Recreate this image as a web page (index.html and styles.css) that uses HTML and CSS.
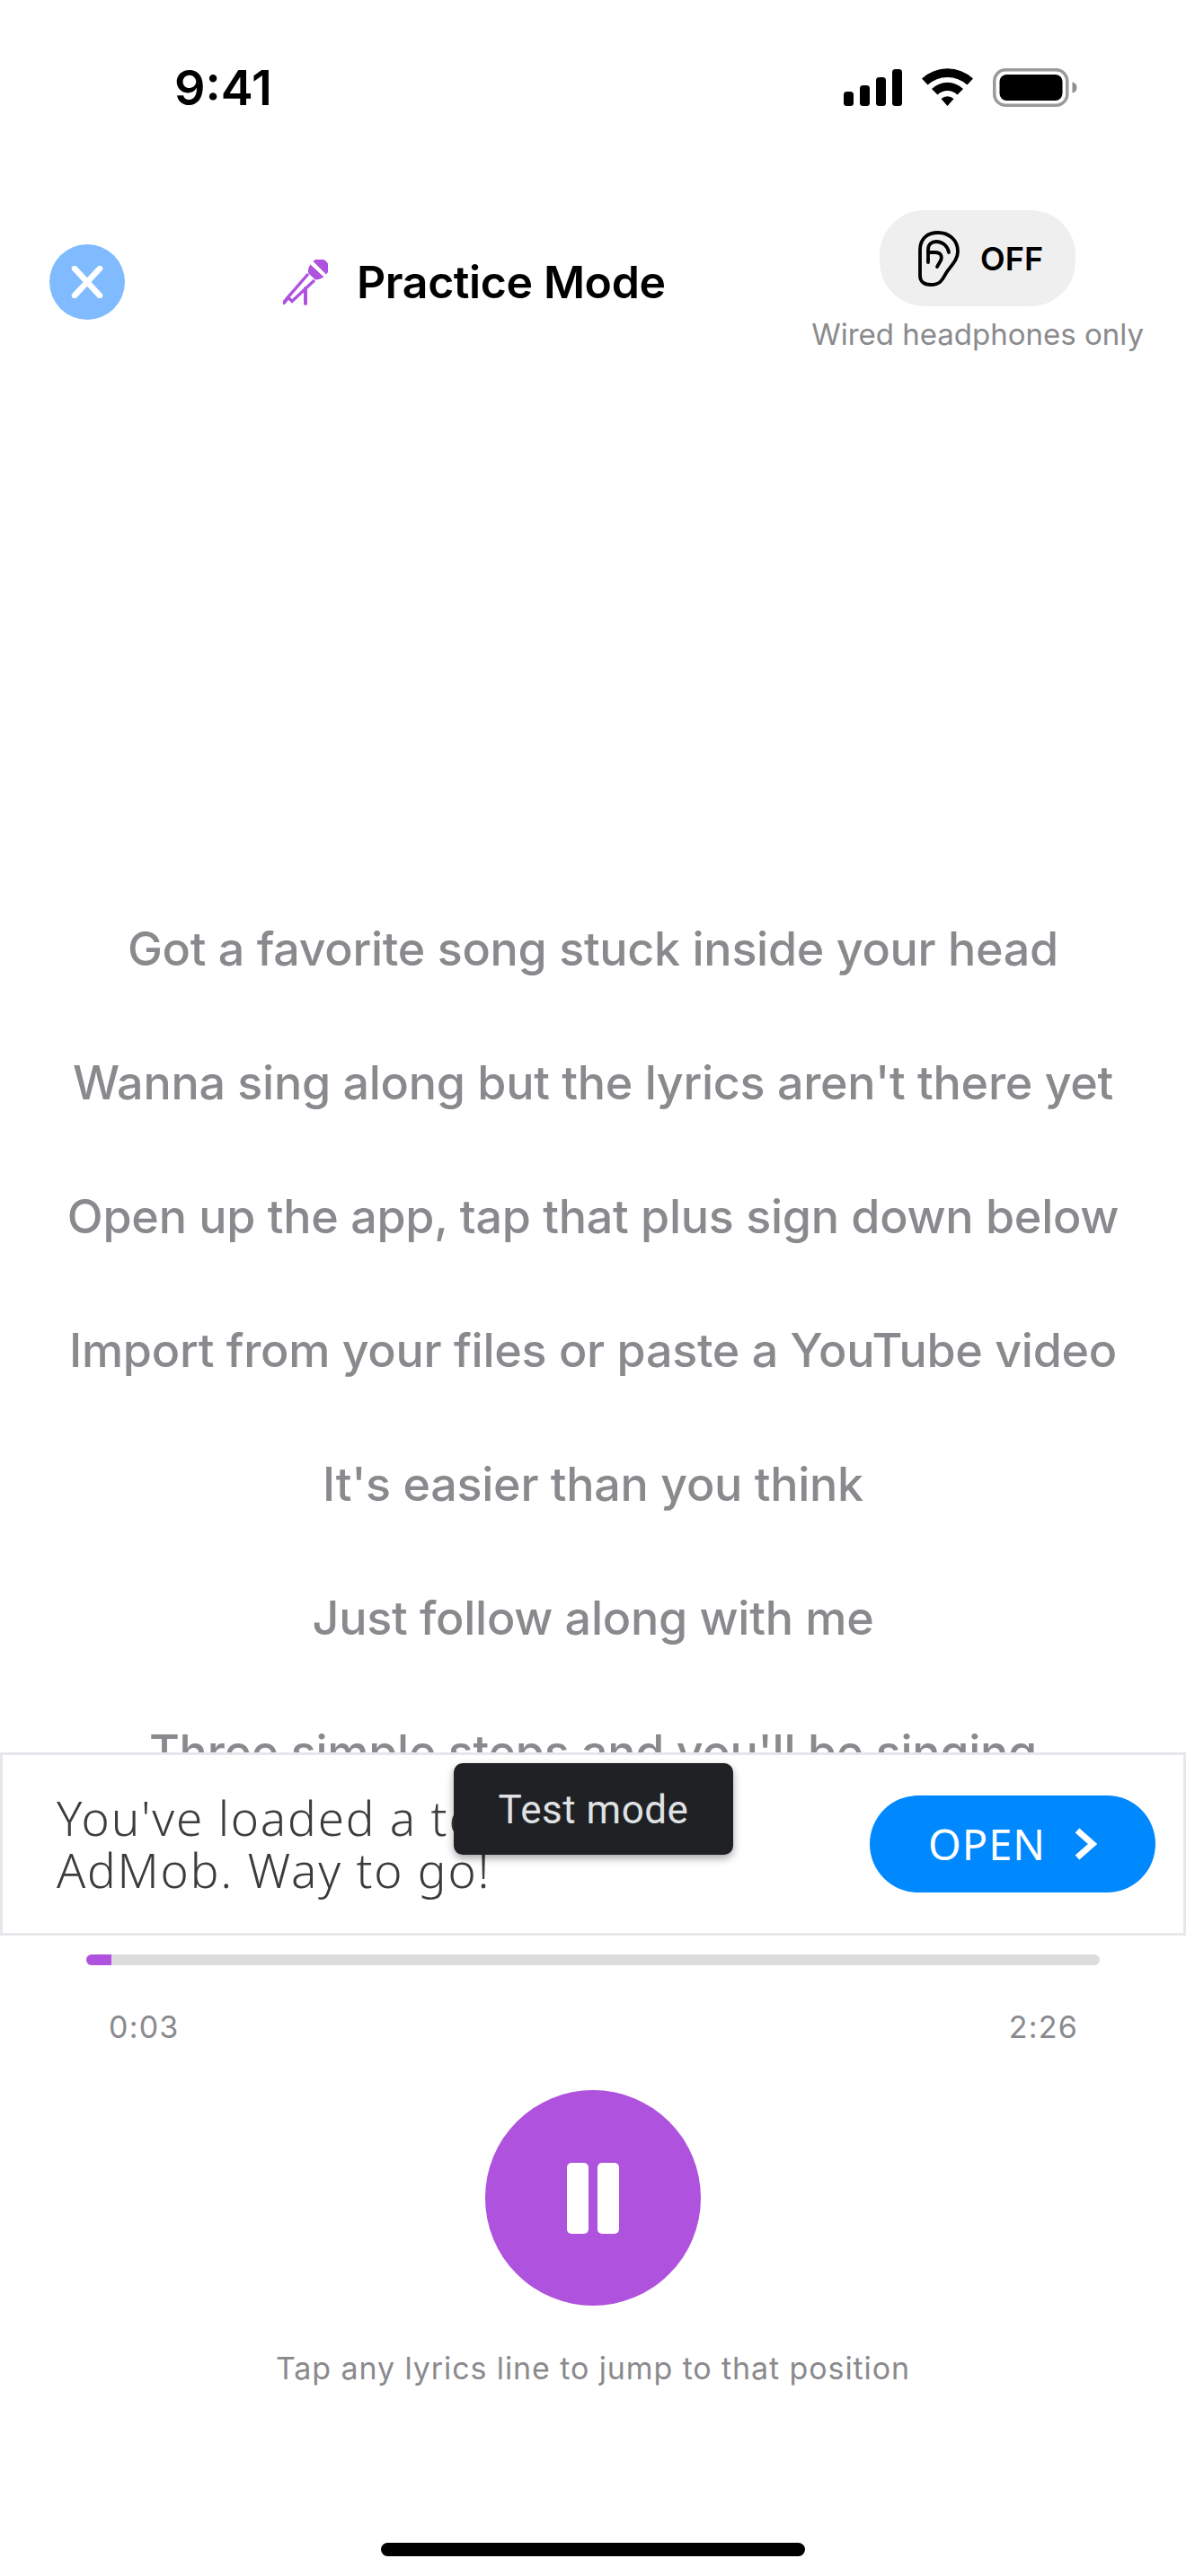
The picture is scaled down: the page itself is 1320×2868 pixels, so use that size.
FILE: index.html
```html
<!DOCTYPE html>
<html lang="en">

<head>
  <meta charset="UTF-8">
  <meta name="viewport" content="width=device-width, initial-scale=1.0">
  <title>Practice Mode</title>
  <link rel="stylesheet" href="styles.css">
</head>

<body>
  <div class="status-bar">
    <span class="clock">9:41</span>
    <div class="status-icons">
      <svg class="signal" width="65" height="41" viewBox="0 0 65 41">
        <rect x="0" y="25" width="11" height="16" rx="3.5" />
        <rect x="18" y="18" width="11" height="23" rx="3.5" />
        <rect x="36" y="9" width="11" height="32" rx="3.5" />
        <rect x="54" y="0" width="11" height="41" rx="3.5" />
      </svg>
      <svg class="wifi" width="57" height="42" viewBox="0 0 57 42">
        <path d="M0 11.5A42 42 0 0 1 57 11.5L50.5 18.5A33 33 0 0 0 6.500 18.5Z" />
        <path d="M11 23A25 25 0 0 1 46 23L39.500 29.500A15.500 15.500 0 0 0 17.500 29.500Z" />
        <path d="M21.500 34A10 10 0 0 1 35.500 34L28.500 42Z" />
      </svg>
      <svg class="battery" width="94" height="43" viewBox="0 0 94 43">
        <rect x="1.750" y="1.750" width="81" height="39.500" rx="12.500" fill="none" stroke="#9a9a9a" stroke-width="3.500" />
        <rect x="7.500" y="7" width="70" height="29" rx="8" />
        <path d="M88.500 15.500C91.500 16 93.500 18.500 93.500 21.500C93.500 24.500 91.500 27 88.500 27.500Z" fill="#8e8e8e" />
      </svg>
    </div>
  </div>

  <header class="top-bar">
    <button class="close-btn">
      <svg width="36" height="36" viewBox="0 0 36 36">
        <path d="M4 3L32 33M32 3L4 33" stroke="#fff" stroke-width="6.500" stroke-linecap="round" />
      </svg>
    </button>
    <div class="title">
      <svg class="mic-icon" width="50" height="51" viewBox="10 9 50 51">
        <path d="M43.500 11A10 10 0 0 1 58 25.500Z" />
        <path d="M40.500 14.500L55.500 28.500Q50.500 31.500 46 31.500L38 24Q37.500 18.500 40.500 14.500Z" />
        <path d="M38 25L15.500 51L20 55.500L45 32" fill="none" stroke="#af52de" stroke-width="3.400" />
        <path d="M15 52L11 57" stroke="#af52de" stroke-width="4" stroke-linecap="round" />
        <path d="M35 41V58" stroke="#af52de" stroke-width="4" stroke-linecap="round" />
      </svg>
      <h1>Practice Mode</h1>
    </div>
    <div class="monitor">
      <button class="monitor-toggle">
        <svg width="46" height="62" viewBox="11 7 46 62" fill="none" stroke="#000" stroke-width="3.800" stroke-linecap="round" stroke-linejoin="round">
          <path d="M13 28C13 15 22 9 33 9C45 9 55 17 55 30C55 40 47 46 42 54C38 61 36 67 25 67C17 67 13 63 13 57Z" />
          <path d="M22 42V28C22 22 26 19 31 19C38 19 44 24 45 31" />
          <path d="M22 31H30C36 31 38 35 36 40L32 47" />
        </svg>
        <span>OFF</span>
      </button>
      <p class="monitor-note">Wired headphones only</p>
    </div>
  </header>

  <div class="lyrics">
    <p>Got a favorite song stuck inside your head</p>
    <p>Wanna sing along but the lyrics aren't there yet</p>
    <p>Open up the app, tap that plus sign down below</p>
    <p>Import from your files or paste a YouTube video</p>
    <p>It's easier than you think</p>
    <p>Just follow along with me</p>
    <p>Three simple steps and you'll be singing</p>
  </div>

  <div class="ad-banner">
    <p class="ad-text">You've loaded a test ad from<br>AdMob. Way to go!</p>
    <button class="ad-open">
      <span>OPEN</span>
      <svg width="25" height="36" viewBox="0 0 25 36">
        <path d="M3 3L20 18L3 33" fill="none" stroke="#fff" stroke-width="7" stroke-linejoin="miter" />
      </svg>
    </button>
    <div class="test-tag">Test mode</div>
  </div>

  <div class="progress-track">
    <div class="progress-fill"></div>
  </div>
  <div class="times">
    <span>0:03</span>
    <span>2:26</span>
  </div>

  <div class="play-wrap">
    <button class="pause-btn">
      <span class="pause-bar"></span>
      <span class="pause-bar"></span>
    </button>
  </div>

  <p class="hint">Tap any lyrics line to jump to that position</p>

  <div class="home-indicator"></div>
</body>

</html>
```

FILE: styles.css
```css
* {
  box-sizing: border-box;
}

body {
  margin: 0;
  width: 1320px;
  height: 2868px;
  overflow: hidden;
  background-color: #ffffff;
  font-family: Inter, "Liberation Sans", sans-serif;
}

p,
h1 {
  margin: 0;
}

button {
  border: none;
  padding: 0;
  font-family: inherit;
}

/* status bar */
.status-bar {
  height: 194px;
  display: flex;
  align-items: center;
  justify-content: space-between;
  padding: 0 121px 0 194px;
}

.clock {
  font-size: 54px;
  font-weight: 600;
  color: #000;
}

.status-icons {
  display: flex;
  align-items: center;
  gap: 22px;
}

/* header */
.top-bar {
  height: 200px;
  padding: 40px 47px 0 55px;
  display: flex;
  align-items: center;
}

.close-btn {
  width: 84px;
  height: 84px;
  border-radius: 50%;
  background-color: #80bbff;
  display: flex;
  align-items: center;
  justify-content: center;
  margin-right: 176px;
}

.title {
  display: flex;
  align-items: center;
  gap: 32px;
}

.title h1 {
  font-size: 50px;
  font-weight: 600;
  letter-spacing: -0.4px;
  color: #000;
}

.mic-icon {
  fill: #af52de;
}

.monitor {
  margin-left: auto;
  align-self: flex-start;
  display: flex;
  flex-direction: column;
  align-items: center;
}

.monitor-toggle {
  width: 218px;
  height: 107px;
  padding-left: 43px;
  border-radius: 50px;
  background-color: #efefef;
  display: flex;
  align-items: center;
  gap: 23px;
  font-size: 36px;
  font-weight: 600;
  color: #000;
}

.monitor-note {
  margin-top: 11px;
  font-size: 33px;
  line-height: 40px;
  color: #8a8a8e;
}

/* lyrics */
.lyrics {
  height: 1557px;
  overflow: hidden;
  padding-top: 588px;
  display: flex;
  flex-direction: column;
}

.lyrics p {
  flex: none;
  height: 149px;
  line-height: 149px;
  text-align: center;
  font-size: 52px;
  font-weight: 500;
  letter-spacing: -0.26px;
  color: #8a8a8e;
  white-space: nowrap;
}

/* ad */
.ad-banner {
  position: relative;
  height: 204px;
  border: 3px solid #e5e7eb;
  padding: 0 31px 0 60px;
  display: flex;
  align-items: center;
  justify-content: space-between;
  background-color: #fff;
}

.ad-text {
  font-family: "Noto Sans", sans-serif;
  font-size: 53px;
  font-weight: 300;
  line-height: 58px;
  letter-spacing: 1.8px;
  color: #3c3c3c;
}

.ad-open {
  width: 318px;
  height: 108px;
  border-radius: 54px;
  background-color: #0088ff;
  color: #fff;
  font-family: "Noto Sans", sans-serif;
  font-size: 47px;
  letter-spacing: 1px;
  display: flex;
  align-items: center;
  justify-content: center;
  gap: 32px;
}

.test-tag {
  position: absolute;
  left: 502px;
  top: 9px;
  width: 311px;
  height: 102px;
  padding-top: 2px;
  border-radius: 10px;
  background-color: #202124;
  color: #dfe1e5;
  font-family: Roboto, sans-serif;
  font-size: 44px;
  letter-spacing: 0.5px;
  display: flex;
  align-items: center;
  justify-content: center;
  box-shadow: 0 4px 10px rgba(0, 0, 0, 0.35);
}

/* player */
.progress-track {
  margin: 21px 96px 0;
  height: 12px;
  border-radius: 6px;
  background-color: #dcdcdc;
}

.progress-fill {
  width: 28px;
  height: 12px;
  border-radius: 6px 0 0 6px;
  background-color: #af52de;
}

.times {
  margin-top: 49px;
  padding: 0 120px 0 121px;
  display: flex;
  justify-content: space-between;
  font-size: 34px;
  line-height: 40px;
  letter-spacing: 1.2px;
  color: #8a8a8e;
}

.play-wrap {
  margin-top: 50px;
  display: flex;
  justify-content: center;
}

.pause-btn {
  width: 240px;
  height: 240px;
  border-radius: 50%;
  background-color: #af52de;
  display: flex;
  align-items: center;
  justify-content: center;
  gap: 10px;
}

.pause-bar {
  width: 24px;
  height: 79px;
  border-radius: 5px;
  background-color: #fff;
}

.hint {
  margin-top: 50px;
  text-align: center;
  font-size: 34px;
  line-height: 40px;
  letter-spacing: 0.9px;
  color: #8a8a8e;
}

.home-indicator {
  width: 472px;
  height: 15px;
  margin: 174px auto 0;
  border-radius: 8px;
  background-color: #000;
}
```
